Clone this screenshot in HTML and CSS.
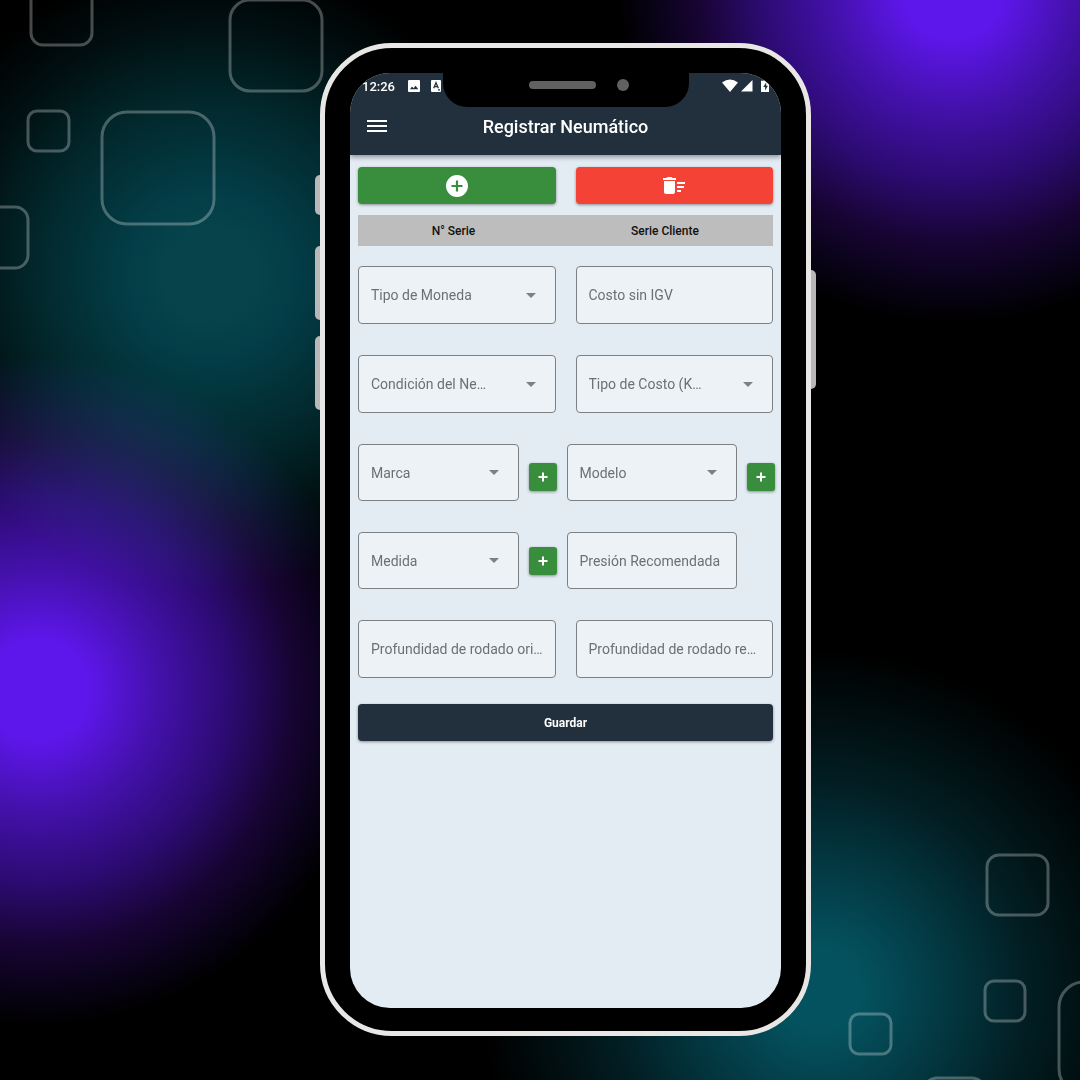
FILE: index.html
```html
<!DOCTYPE html>
<html lang="es">
<head>
<meta charset="utf-8">
<meta name="viewport" content="width=device-width, initial-scale=1">
<title>Registrar Neumático</title>
<link rel="stylesheet" href="styles.css">
</head>
<body>
<div class="stage">
  <svg class="backdrop" viewBox="0 0 1080 1080" preserveAspectRatio="xMidYMid slice" aria-hidden="true">
    <defs>
      <radialGradient id="violet">
        <stop offset="0" stop-color="#5d17eb"/>
        <stop offset=".15" stop-color="#5d17eb"/>
        <stop offset=".35" stop-color="#4511ae"/>
        <stop offset=".58" stop-color="#2b0b70"/>
        <stop offset=".76" stop-color="#180433"/>
        <stop offset=".88" stop-color="#0a031a"/>
        <stop offset="1" stop-color="#000"/>
      </radialGradient>
      <radialGradient id="teal">
        <stop offset="0" stop-color="#06434b"/>
        <stop offset=".15" stop-color="#06434b"/>
        <stop offset=".28" stop-color="#033c46"/>
        <stop offset=".55" stop-color="#02282c"/>
        <stop offset=".8" stop-color="#010f11"/>
        <stop offset="1" stop-color="#000"/>
      </radialGradient>
      <radialGradient id="teal-bright">
        <stop offset="0" stop-color="#04525f"/>
        <stop offset=".12" stop-color="#04525f"/>
        <stop offset=".4" stop-color="#03353e"/>
        <stop offset=".6" stop-color="#021f24"/>
        <stop offset=".8" stop-color="#010f11"/>
        <stop offset="1" stop-color="#000"/>
      </radialGradient>
    </defs>
    <rect width="1080" height="1080"/>
    <g class="glow">
      <circle cx="210" cy="275" r="315" fill="url(#teal)"/>
      <circle cx="820" cy="990" r="340" fill="url(#teal-bright)"/>
      <circle cx="38" cy="690" r="335" fill="url(#violet)"/>
      <circle cx="953" cy="-12" r="335" fill="url(#violet)"/>
    </g>
    <g class="squares">
      <rect x="31" y="-17" width="61" height="62" rx="12"/>
      <rect x="230" y="0" width="92" height="91" rx="20"/>
      <rect x="28" y="111" width="41" height="40" rx="9"/>
      <rect x="102" y="112" width="112" height="112" rx="25"/>
      <rect x="-33" y="207" width="61" height="61" rx="13"/>
      <rect x="987" y="855" width="61" height="60" rx="12"/>
      <rect x="985" y="981" width="40" height="40" rx="9"/>
      <rect x="850" y="1014" width="41" height="40" rx="9"/>
      <rect x="1059" y="982" width="112" height="112" rx="25"/>
      <rect x="924" y="1078" width="61" height="61" rx="13"/>
    </g>
  </svg>

  <main class="phone">
    <span class="key key-mute"></span>
    <span class="key key-up"></span>
    <span class="key key-down"></span>
    <span class="key key-power"></span>
    <div class="notch"><span class="speaker"></span><span class="camera"></span></div>

    <div class="screen">
      <header class="top">
        <div class="status">
          <span class="clock">12:26</span>
          <svg class="status-icon" viewBox="0 0 12 12" aria-hidden="true"><path fill="#fff" fill-rule="evenodd" d="M1 0h10a1 1 0 0 1 1 1v10a1 1 0 0 1-1 1H1a1 1 0 0 1-1-1V1a1 1 0 0 1 1-1zM2 9.300h8.300L7.600 5.700 5.500 8.300 4 6.600z"/></svg>
          <svg class="status-icon status-app" viewBox="0 0 12 12" aria-hidden="true"><rect x="1" width="10" height="12" rx="1" fill="#fff"/><path d="M3.700 8.200 6 2.600l2.300 5.600M4.600 6.600h2.800M8 9.800h2" fill="none" stroke="#222f3c" stroke-width="1.300"/></svg>
          <svg class="signal" viewBox="0 0 48 14" aria-hidden="true"><path fill="#fff" d="M0 3.500Q8-2.500 16 3.500L8 13zM19 12.500h11.500V1zM40 1.700h1.700V.5h3v1.200H47v11.300h-8V1.700z"/><path fill="#222f3c" d="M44.200 3.400 41.200 8h1.900v3.500L46 6.800h-1.800z"/></svg>
        </div>
        <div class="appbar">
          <button class="menu" type="button" aria-label="Menú"><span></span><span></span><span></span></button>
          <h1 class="title">Registrar Neumático</h1>
        </div>
      </header>

      <form class="form">
        <div class="row actions">
          <button class="btn add" type="button" aria-label="Agregar">
            <svg class="icon" viewBox="0 0 24 24" aria-hidden="true"><path fill="#fff" d="M12 1a11 11 0 1 0 0 22 11 11 0 0 0 0-22zm5.500 12.100h-4.400v4.400h-2.200v-4.400H6.500v-2.200h4.400V6.500h2.200v4.400h4.400z"/></svg>
          </button>
          <button class="btn remove" type="button" aria-label="Borrar todo">
            <svg class="icon" viewBox="0 0 24 24" aria-hidden="true"><path fill="#fff" d="M15 16h4v2h-4zm0-8h8v2h-8zm0 4h7v2h-7zM2 18c0 1.100.9 2 2 2h7c1.100 0 2-.9 2-2V7H2zM14 4h-3.500l-1-1h-4l-1 1H1v2h13z"/></svg>
          </button>
        </div>

        <table class="series">
          <thead><tr><th scope="col">N° Serie</th><th scope="col">Serie Cliente</th></tr></thead>
        </table>

        <div class="row">
          <select class="field" aria-label="Tipo de Moneda"><option>Tipo de Moneda</option></select>
          <input class="field" type="text" aria-label="Costo sin IGV" placeholder="Costo sin IGV">
        </div>
        <div class="row">
          <select class="field" aria-label="Condición del Neumático"><option>Condición del Ne…</option></select>
          <select class="field" aria-label="Tipo de Costo"><option>Tipo de Costo (K…</option></select>
        </div>
        <div class="row with-plus">
          <select class="field" aria-label="Marca"><option>Marca</option></select>
          <button class="plus plus-low" type="button" aria-label="Agregar marca"><svg viewBox="0 0 10 10" aria-hidden="true"><path d="M5 .5v9M.5 5h9"/></svg></button>
          <select class="field" aria-label="Modelo"><option>Modelo</option></select>
          <button class="plus plus-low" type="button" aria-label="Agregar modelo"><svg viewBox="0 0 10 10" aria-hidden="true"><path d="M5 .5v9M.5 5h9"/></svg></button>
        </div>
        <div class="row with-plus">
          <select class="field" aria-label="Medida"><option>Medida</option></select>
          <button class="plus" type="button" aria-label="Agregar medida"><svg viewBox="0 0 10 10" aria-hidden="true"><path d="M5 .5v9M.5 5h9"/></svg></button>
          <input class="field" type="text" aria-label="Presión Recomendada" placeholder="Presión Recomendada">
        </div>
        <div class="row">
          <input class="field" type="text" aria-label="Profundidad de rodado original" placeholder="Profundidad de rodado ori…">
          <input class="field" type="text" aria-label="Profundidad de rodado remanente" placeholder="Profundidad de rodado re…">
        </div>

        <button class="btn save" type="submit">Guardar</button>
      </form>
    </div>
  </main>
</div>
</body>
</html>
```
FILE: styles.css
```css
* {
  box-sizing: border-box;
}

body {
  margin: 0;
  background: #000;
  font-family: Roboto, "Liberation Sans", sans-serif;
}

.stage {
  position: relative;
  display: flex;
  justify-content: center;
  min-height: 100vh;
  padding: 43px 0 44px 51px;
  overflow: hidden;
}

.backdrop {
  position: absolute;
  inset: 0;
  width: 100%;
  height: 100%;
}

.glow circle {
  mix-blend-mode: screen;
}

.squares rect {
  fill: none;
  stroke: #fff;
  stroke-opacity: .28;
  stroke-width: 3;
}

/* Phone shell */
.phone {
  position: relative;
  display: flex;
  width: 100%;
  max-width: 491px;
  padding: 25px 25px 23px;
  border: 5px solid #e9e7e6;
  border-radius: 72px;
  background: #000;
}

.key {
  position: absolute;
  left: -10px;
  width: 5px;
  height: 74px;
  border-radius: 5px 0 0 5px;
  background: #b9b7b7;
}

.key-mute { top: 127px; height: 40px; }
.key-up { top: 198px; }
.key-down { top: 288px; }

.key-power {
  top: 222px;
  right: -10px;
  left: auto;
  height: 119px;
  border-radius: 0 5px 5px 0;
}

.notch {
  position: absolute;
  z-index: 1;
  top: 20px;
  left: 50%;
  display: flex;
  align-items: center;
  justify-content: center;
  gap: 21px;
  width: 246px;
  height: 39px;
  padding: 0 0 6px 26px;
  transform: translateX(-50%);
  border-radius: 0 0 24px 24px;
  background: #000;
}

.speaker {
  width: 67px;
  height: 8px;
  border-radius: 4px;
  background: #616161;
}

.camera {
  width: 12px;
  height: 12px;
  border-radius: 50%;
  background: #616161;
}

.screen {
  flex: 1;
  min-width: 0;
  overflow: hidden;
  border-radius: 40px;
  background: #e3ebf3;
}

/* Status bar and app bar */
.top {
  background: #222f3c;
  color: #fff;
  box-shadow: 0 2px 5px rgba(0, 0, 0, .4);
}

.status {
  display: flex;
  align-items: center;
  height: 26px;
  padding: 0 11px 0 12px;
}

.clock {
  margin-right: 13px;
  font-size: 13px;
  font-weight: 500;
}

.status-icon {
  width: 12px;
  height: 12px;
}

.status-app {
  margin-left: 10px;
}

.signal {
  width: 48px;
  height: 14px;
  margin-left: auto;
}

.appbar {
  display: grid;
  grid-template-columns: 20px 1fr 20px;
  align-items: center;
  height: 56px;
  padding: 0 17px 2px;
}

.menu {
  display: grid;
  gap: 3px;
  padding: 0;
  border: 0;
  background: none;
}

.menu span {
  height: 2px;
  background: #fff;
}

.title {
  margin: 0;
  font-size: 18px;
  font-weight: 500;
  text-align: center;
}

/* Form */
.form {
  display: flex;
  flex-direction: column;
  padding: 12px 8px;
}

.row {
  display: grid;
  grid-template-columns: 1fr 1fr;
  gap: 20px;
  margin-bottom: 31px;
}

.actions {
  margin-bottom: 11px;
}

.btn {
  display: flex;
  align-items: center;
  justify-content: center;
  height: 37px;
  padding: 0;
  border: 0;
  border-radius: 4px;
  color: #fff;
  font: 700 12px Roboto, sans-serif;
  box-shadow: 0 1px 3px rgba(0, 0, 0, .4);
}

.add { background: #388e3c; }
.remove { background: #f44336; }

.save {
  margin-top: -5px;
  background: #222f3c;
}

.icon {
  width: 24px;
  height: 24px;
}

.series {
  width: 100%;
  margin-bottom: 20px;
  border-collapse: collapse;
  table-layout: fixed;
  background: #bdbdbd;
  color: #111;
}

.series th {
  height: 31px;
  padding: 0;
  font-size: 12px;
  font-weight: 500;
}

.series th:first-child {
  width: 46%;
}

.series th:last-child {
  padding-left: 8px;
}

.field {
  width: 100%;
  min-width: 0;
  height: 58px;
  padding: 0 8px 0 12px;
  border: 1px solid #7d8083;
  border-radius: 4px;
  background: #edf2f7;
  color: #6d7073;
  font: 400 14px Roboto, sans-serif;
  text-overflow: ellipsis;
  appearance: none;
}

.field::placeholder {
  color: #6d7073;
  opacity: 1;
}

select.field {
  background: #edf2f7 url("data:image/svg+xml,%3Csvg xmlns='http://www.w3.org/2000/svg' viewBox='0 0 10 5'%3E%3Cpath fill='%237d8083' d='M0 0h10L5 5z'/%3E%3C/svg%3E") no-repeat right 19px center / 10px 5px;
}

.with-plus {
  grid-template-columns: 161fr 28px 171fr 28px;
  column-gap: 10px;
  align-items: center;
  margin-right: -2px;
}

.with-plus .field {
  height: 57px;
}

.plus {
  display: grid;
  place-items: center;
  width: 28px;
  height: 28px;
  padding: 0;
  border: 0;
  border-radius: 3px;
  background: #388e3c;
  box-shadow: 0 1px 3px rgba(0, 0, 0, .4);
}

.plus-low {
  margin-top: 9px;
}

.plus svg {
  width: 10px;
  height: 10px;
}

.plus path {
  stroke: #fff;
  stroke-width: 2;
}
```
